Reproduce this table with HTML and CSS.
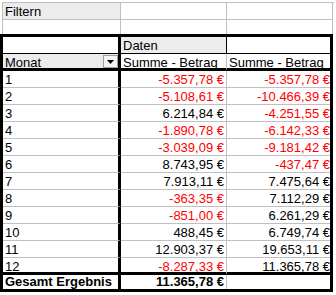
FILE: index.html
```html
<!DOCTYPE html>
<html lang="de">
<head>
<meta charset="utf-8">
<link rel="stylesheet" href="styles.css">
</head>
<body>
<div class="top">
  <div class="c a r1 gray">Filtern</div>
  <div class="c b r1"></div>
  <div class="c cc r1"></div>
  <div class="c a r2"></div>
  <div class="c b r2"></div>
  <div class="c cc r2"></div>
</div>
<div class="pivot">
  <div class="c pa h3"></div>
  <div class="c pb h3 gray">Daten</div>
  <div class="c pc h3"></div>

  <div class="c pa h4 gray monat"><span>Monat</span><span class="dd"><svg width="7" height="4" viewBox="0 0 7 4"><path d="M0 0h7L3.5 4z" fill="#000"/></svg></span></div>
  <div class="c pb h4">Summe - Betrag</div>
  <div class="c pc h4">Summe - Betrag</div>

  <div class="c pa d">1</div><div class="c pb d num neg">-5.357,78 €</div><div class="c pc d num neg">-5.357,78 €</div>
  <div class="c pa d">2</div><div class="c pb d num neg">-5.108,61 €</div><div class="c pc d num neg">-10.466,39 €</div>
  <div class="c pa d">3</div><div class="c pb d num">6.214,84 €</div><div class="c pc d num neg">-4.251,55 €</div>
  <div class="c pa d">4</div><div class="c pb d num neg">-1.890,78 €</div><div class="c pc d num neg">-6.142,33 €</div>
  <div class="c pa d">5</div><div class="c pb d num neg">-3.039,09 €</div><div class="c pc d num neg">-9.181,42 €</div>
  <div class="c pa d">6</div><div class="c pb d num">8.743,95 €</div><div class="c pc d num neg">-437,47 €</div>
  <div class="c pa d">7</div><div class="c pb d num">7.913,11 €</div><div class="c pc d num">7.475,64 €</div>
  <div class="c pa d">8</div><div class="c pb d num neg">-363,35 €</div><div class="c pc d num">7.112,29 €</div>
  <div class="c pa d">9</div><div class="c pb d num neg">-851,00 €</div><div class="c pc d num">6.261,29 €</div>
  <div class="c pa d">10</div><div class="c pb d num">488,45 €</div><div class="c pc d num">6.749,74 €</div>
  <div class="c pa d">11</div><div class="c pb d num">12.903,37 €</div><div class="c pc d num">19.653,11 €</div>
  <div class="c pa d last">12</div><div class="c pb d num neg last">-8.287,33 €</div><div class="c pc d num last">11.365,78 €</div>

  <div class="c pa tot bold">Gesamt Ergebnis</div>
  <div class="c pb tot num bold">11.365,78 €</div>
  <div class="c pc tot"></div>
</div>
</body>
</html>
```
FILE: styles.css
```css
html, body {
  margin: 0;
  padding: 0;
  background: #fff;
}
body {
  font-family: "Liberation Sans", Arial, sans-serif;
  font-size: 13px;
  color: #000;
  width: 336px;
  height: 295px;
  overflow: hidden;
}
.c {
  box-sizing: border-box;
  white-space: nowrap;
  overflow: hidden;
  line-height: 15px;
  padding: 1px 2px 0 2px;
}
.top {
  display: grid;
  grid-template-columns: 118px 106px 106px;
  margin: 2px 0 0 2px;
  border-left: 1px solid #c0c0c0;
  border-top: 1px solid #c0c0c0;
  width: 331px;
}
.top .c {
  border-right: 1px solid #c0c0c0;
}
.r1 {
  height: 17px;
  border-bottom: 1px solid #c0c0c0;
}
.r2 {
  height: 14px;
}
.gray {
  background: #ececec;
}
.pivot {
  display: grid;
  grid-template-columns: 118px 106px 103px;
  width: 333px;
  box-sizing: border-box;
  border: 3px solid #000;
}
.pa {
  border-right: 3px solid #000;
}
.pb {
  border-right: 1px solid #c0c0c0;
}
.h3 {
  height: 17px;
  border-bottom: 1px solid #000;
}
.h3.pb {
  border-right-color: #000;
}
.h4 {
  height: 17px;
  border-bottom: 3px solid #000;
}
.monat {
  display: flex;
  padding-right: 0;
}
.dd {
  margin-left: auto;
  margin-top: 0;
  width: 15px;
  height: 13px;
  box-sizing: border-box;
  border: 1px solid #a0a0a0;
  background: #f4f4f4;
  display: flex;
  align-items: center;
  justify-content: center;
}
.d {
  height: 17px;
  border-bottom: 1px solid #c0c0c0;
}
.d.last {
  border-bottom: 3px solid #000;
}
.tot {
  height: 14px;
  line-height: 14px;
  padding-top: 0;
  overflow: visible;
}
.num {
  text-align: right;
}
.pc.num {
  padding-right: 0;
}
.neg {
  color: #ff0000;
}
.bold {
  font-weight: bold;
}
```
